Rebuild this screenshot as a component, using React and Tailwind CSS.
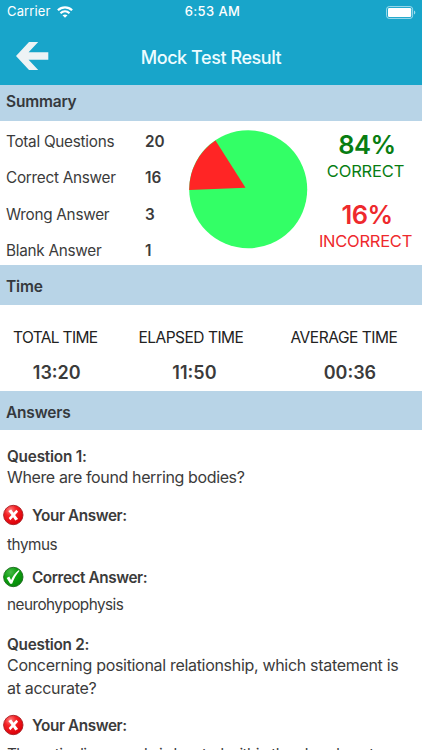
import React from "react";

const summary = [
  { label: "Total Questions", value: "20" },
  { label: "Correct Answer", value: "16" },
  { label: "Wrong Answer", value: "3" },
  { label: "Blank Answer", value: "1" },
];

const SectionTitle = ({ title, className }) => (
  <h2
    className={`flex items-center bg-[#b8d4e7] pl-[6px] text-[15.5px] font-semibold tracking-[-0.2px] text-[#35393d] ${className}`}
  >
    {title}
  </h2>
);

const StatusBar = () => (
  <div className="grid h-6 grid-cols-3 items-center pl-[7px] pr-[6px] text-[13px] text-white">
    <div className="flex items-center gap-[6px]">
      <span className="tracking-[0.01em]">Carrier</span>
      <svg width="16" height="12" viewBox="0 0 16 12" fill="none" stroke="white" strokeWidth="2.2">
        <path d="M.9 4.2C4.9.3 11.1.3 15.1 4.2" />
        <path d="M3.5 7.2c2.6-2.4 6.4-2.4 9 0" />
        <path d="M5.5 9.3 8 11.8l2.5-2.5c-1.5-1.2-3.5-1.2-5 0Z" fill="white" stroke="none" />
      </svg>
    </div>
    <span className="pl-[2px] text-center font-medium tracking-[0.03em]">6:53 AM</span>
    <svg className="justify-self-end" width="30" height="13" viewBox="0 0 30 13">
      <rect x="0.6" y="0.6" width="26" height="11.8" rx="2.6" fill="none" stroke="#a3dced" strokeWidth="1" />
      <rect x="2" y="2" width="23.2" height="9" rx="1.3" fill="white" />
      <path d="M28 4.5c1.8.7 1.8 3.3 0 4Z" fill="#a3dced" />
    </svg>
  </div>
);

const StatusIcon = ({ correct }) => (
  <svg width="22" height="22" viewBox="0 0 22 22" className="shrink-0">
    <defs>
      <radialGradient id="redBall" cx="35%" cy="25%" r="75%">
        <stop offset="0" stopColor="#ff8080" />
        <stop offset="0.4" stopColor="#f52226" />
        <stop offset="1" stopColor="#dc0008" />
      </radialGradient>
      <radialGradient id="greenBall" cx="35%" cy="25%" r="75%">
        <stop offset="0" stopColor="#48b848" />
        <stop offset="0.5" stopColor="#0da00f" />
        <stop offset="1" stopColor="#078a0a" />
      </radialGradient>
    </defs>
    <circle
      cx="11.3"
      cy="11"
      r="9.7"
      fill={correct ? "url(#greenBall)" : "url(#redBall)"}
      stroke={correct ? "#17681b" : "#a51c20"}
      strokeWidth="0.9"
    />
    {correct ? (
      <path d="m4.6 12 2.7-1.4 1.8 3.3C10.8 10.3 13 7 16.4 4.2l1.2.5c-3.4 3.9-5.7 8-7.5 13.1H8.2Z" fill="white" />
    ) : (
      <path d="m6.3 7 2.9-1.5 2.3 3.3 2.9-3 1.7 1.9-3 3.3 3 4-2.8 1.4-2.2-3.2-2.8 3-1.6-2.1 2.8-3.1Z" fill="white" />
    )}
  </svg>
);

const AnswerHeading = ({ correct, title }) => (
  <div className="-ml-[5px] flex h-[22px] items-center gap-[8px] text-[15.3px] font-semibold tracking-[-0.4px]">
    <StatusIcon correct={correct} />
    <h4 className="pt-[2px]">{title}</h4>
  </div>
);

const TimeStat = ({ label, value, labelClass, valueClass }) => (
  <div className="text-center">
    <div className={`text-[15.5px] leading-5 text-[#222] ${labelClass}`}>{label}</div>
    <div className={`mt-[15px] text-[18px] leading-5 font-semibold ${valueClass}`}>{value}</div>
  </div>
);

const App = () => {
  return (
    <div className="flex h-[750px] w-[422px] flex-col overflow-hidden bg-white font-['Inter','Liberation_Sans',sans-serif] text-[#3b3b3b]">
      <header className="h-[85px] shrink-0 bg-[#18a5ca]">
        <StatusBar />
        <div className="grid h-[61px] grid-cols-[1fr_auto_1fr] items-center">
          <button aria-label="Back" className="pt-[3px] pl-4">
            <svg width="33" height="28" viewBox="0 0 33 28">
              <path d="M13 0h9.2L12.6 10.3H32.3v7.4H12.6L22.2 28H13L0 14Z" fill="#eef3f5" />
            </svg>
          </button>
          <h1 className="pt-[6px] text-[18px] font-medium tracking-[-0.44px] text-[#edfcff]">
            Mock Test Result
          </h1>
        </div>
      </header>

      <SectionTitle title="Summary" className="h-[36px] shrink-0 pb-[3px]" />
      <section className="flex h-[144px] shrink-0 overflow-hidden">
        <div className="w-[189px] shrink-0 pt-[3px] pl-[6px] text-[15.3px]">
          {summary.map((row) => (
            <div key={row.label} className="grid h-[36.4px] grid-cols-[139px_1fr] items-center">
              <span className="tracking-[-0.27px]">{row.label}</span>
              <span className="font-semibold">{row.value}</span>
            </div>
          ))}
        </div>
        <svg className="mt-[8px] shrink-0" width="119" height="120" viewBox="0 0 119 120">
          <circle cx="59.2" cy="60.3" r="59" fill="#33ff66" />
          <path d="M56.5 58.8 26.5 11.5A59 59 0 0 0 .2 61Z" fill="#ff2525" />
        </svg>
        <div className="w-[115px] shrink-0 pt-[8px] text-center">
          <div className="text-[#087d12]">
            <div className="pl-[3px] text-[25.5px] leading-8 font-semibold tracking-[-0.02em]">84%</div>
            <div className="text-[16.5px] leading-5 tracking-[-0.01em]">CORRECT</div>
          </div>
          <div className="mt-[18px] text-[#ee292d]">
            <div className="pl-[3px] text-[25.5px] leading-8 font-semibold tracking-[-0.02em]">16%</div>
            <div className="text-[16.5px] leading-5 tracking-[-0.015em]">INCORRECT</div>
          </div>
        </div>
      </section>

      <SectionTitle title="Time" className="h-[40px] shrink-0 pt-[4px]" />
      <section className="flex h-[86px] shrink-0 gap-[41px] pt-[23px] pl-[13px]">
        <TimeStat label="TOTAL TIME" value="13:20" labelClass="tracking-[-0.65px]" valueClass="pl-[3px]" />
        <TimeStat label="ELAPSED TIME" value="11:50" labelClass="tracking-[-0.5px]" valueClass="pl-[7px]" />
        <div className="ml-[6px]">
          <TimeStat label="AVERAGE TIME" value="00:36" labelClass="tracking-[-0.46px]" valueClass="pl-[12px]" />
        </div>
      </section>

      <SectionTitle title="Answers" className="h-[39px] shrink-0 pt-[4px]" />
      <section className="min-h-0 flex-1 overflow-hidden pt-[16px] pl-[7px]">
        <article className="h-[188px]">
          <h3 className="pt-px text-[15.3px] leading-[19px] font-semibold tracking-[-0.2px]">Question 1:</h3>
          <p className="mb-[15px] text-[16px] leading-[23px] tracking-[-0.37px]">
            Where are found herring bodies?
          </p>
          <AnswerHeading title="Your Answer:" />
          <p className="mt-[7px] mb-[9px] text-[15.3px] leading-6 tracking-[-0.45px]">thymus</p>
          <AnswerHeading correct title="Correct Answer:" />
          <p className="mt-[5px] text-[15.3px] leading-6 tracking-[-0.53px]">neurohypophysis</p>
        </article>
        <article>
          <h3 className="pt-px text-[15.3px] leading-[19px] font-semibold tracking-[-0.25px]">Question 2:</h3>
          <p className="mb-[14px] w-[400px] text-[16px] leading-[23px] tracking-[-0.31px]">
            Concerning positional relationship, which statement is at accurate?
          </p>
          <AnswerHeading title="Your Answer:" />
          <p className="mt-[7px] text-[15.3px] leading-6 tracking-[-0.5px] whitespace-nowrap">
            The optic disc macula is located within the chondrocyte
          </p>
        </article>
      </section>
    </div>
  );
};

export default App;
